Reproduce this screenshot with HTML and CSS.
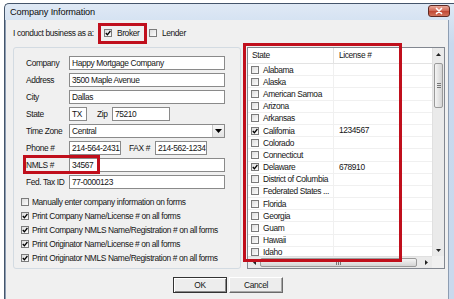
FILE: index.html
```html
<!DOCTYPE html>
<html>
<head>
<meta charset="utf-8">
<link rel="stylesheet" href="styles.css">
</head>
<body>
<div class="window">
  <div class="titlebar">
    <span class="title">Company Information</span>
    <span class="close"><svg viewBox="0 0 22 12" width="22" height="12"><path d="M8 3 L14 9 M14 3 L8 9" stroke="#fff" stroke-width="2" stroke-linecap="round"/></svg></span>
  </div>
  <div class="frame">
    <div class="client">
      <div class="bizrow">
        <span class="biz-lbl">I conduct business as a:</span>
        <span class="chk"><svg viewBox="0 0 6 6"><path d="M0.8 3 L2.4 4.8 L5.4 1"/></svg></span>
        <span class="opt-lbl">Broker</span>
        <span class="chk"></span>
        <span class="opt-lbl">Lender</span>
      </div>
      <div class="main">
        <div class="group">
          <div class="fields">
            <span class="lbl">Company</span><div class="tb">Happy Mortgage Company</div>
            <span class="lbl">Address</span><div class="tb">3500 Maple Avenue</div>
            <span class="lbl">City</span><div class="tb">Dallas</div>
            <span class="lbl">State</span>
            <div class="pair">
              <div class="tb tb-state">TX</div>
              <span class="lbl zip-lbl">Zip</span>
              <div class="tb tb-zip">75210</div>
            </div>
            <span class="lbl">Time Zone</span>
            <div class="tb select">Central<span class="drop"><svg viewBox="0 0 7 4" width="7" height="4"><path d="M0 0 H7 L3.5 4 Z" fill="#000"/></svg></span></div>
            <span class="lbl">Phone #</span>
            <div class="pair">
              <div class="tb tb-phone">214-564-2431</div>
              <span class="lbl fax-lbl">FAX #</span>
              <div class="tb tb-phone">214-562-1234</div>
            </div>
            <span class="lbl">NMLS #</span><div class="tb">34567</div>
            <span class="lbl">Fed. Tax ID</span><div class="tb">77-0000123</div>
          </div>
          <div class="opts">
            <div class="opt"><span class="chk"></span><span>Manually enter company information on forms</span></div>
            <div class="opt"><span class="chk"><svg viewBox="0 0 6 6"><path d="M0.8 3 L2.4 4.8 L5.4 1"/></svg></span><span>Print Company Name/License # on all forms</span></div>
            <div class="opt"><span class="chk"><svg viewBox="0 0 6 6"><path d="M0.8 3 L2.4 4.8 L5.4 1"/></svg></span><span>Print Company NMLS Name/Registration # on all forms</span></div>
            <div class="opt"><span class="chk"><svg viewBox="0 0 6 6"><path d="M0.8 3 L2.4 4.8 L5.4 1"/></svg></span><span>Print Originator Name/License # on all forms</span></div>
            <div class="opt"><span class="chk"><svg viewBox="0 0 6 6"><path d="M0.8 3 L2.4 4.8 L5.4 1"/></svg></span><span>Print Originator NMLS Name/Registration # on all forms</span></div>
          </div>
        </div>
        <div class="list">
          <div class="lv">
            <div class="lv-head"><span class="c1">State</span><span class="c2">License #</span></div>
            <div class="lv-row"><span class="c1"><span class="chk"></span><span class="st">Alabama</span></span><span class="c2"></span></div>
            <div class="lv-row"><span class="c1"><span class="chk"></span><span class="st">Alaska</span></span><span class="c2"></span></div>
            <div class="lv-row"><span class="c1"><span class="chk"></span><span class="st">American Samoa</span></span><span class="c2"></span></div>
            <div class="lv-row"><span class="c1"><span class="chk"></span><span class="st">Arizona</span></span><span class="c2"></span></div>
            <div class="lv-row"><span class="c1"><span class="chk"></span><span class="st">Arkansas</span></span><span class="c2"></span></div>
            <div class="lv-row"><span class="c1"><span class="chk"><svg viewBox="0 0 6 6"><path d="M0.8 3 L2.4 4.8 L5.4 1"/></svg></span><span class="st">California</span></span><span class="c2">1234567</span></div>
            <div class="lv-row"><span class="c1"><span class="chk"></span><span class="st">Colorado</span></span><span class="c2"></span></div>
            <div class="lv-row"><span class="c1"><span class="chk"></span><span class="st">Connecticut</span></span><span class="c2"></span></div>
            <div class="lv-row"><span class="c1"><span class="chk"><svg viewBox="0 0 6 6"><path d="M0.8 3 L2.4 4.8 L5.4 1"/></svg></span><span class="st">Delaware</span></span><span class="c2">678910</span></div>
            <div class="lv-row"><span class="c1"><span class="chk"></span><span class="st">District of Columbia</span></span><span class="c2"></span></div>
            <div class="lv-row"><span class="c1"><span class="chk"></span><span class="st">Federated States ...</span></span><span class="c2"></span></div>
            <div class="lv-row"><span class="c1"><span class="chk"></span><span class="st">Florida</span></span><span class="c2"></span></div>
            <div class="lv-row"><span class="c1"><span class="chk"></span><span class="st">Georgia</span></span><span class="c2"></span></div>
            <div class="lv-row"><span class="c1"><span class="chk"></span><span class="st">Guam</span></span><span class="c2"></span></div>
            <div class="lv-row"><span class="c1"><span class="chk"></span><span class="st">Hawaii</span></span><span class="c2"></span></div>
            <div class="lv-row"><span class="c1"><span class="chk"></span><span class="st">Idaho</span></span><span class="c2"></span></div>
          </div>
          <div class="vs">
            <span class="sbtn"><svg viewBox="0 0 5 3" width="5" height="3"><path d="M0 3 H5 L2.5 0 Z" fill="#222"/></svg></span>
            <span class="vthumb"><span class="grip-h"></span></span>
            <span class="sbtn down"><svg viewBox="0 0 5 3" width="5" height="3"><path d="M0 0 H5 L2.5 3 Z" fill="#222"/></svg></span>
          </div>
          <div class="hs">
            <span class="sbtn"><svg viewBox="0 0 3 5" width="3" height="5"><path d="M3 0 V5 L0 2.5 Z" fill="#222"/></svg></span>
            <span class="hthumb"><span class="grip-v"></span></span>
            <span class="sbtn right"><svg viewBox="0 0 3 5" width="3" height="5"><path d="M0 0 V5 L3 2.5 Z" fill="#222"/></svg></span>
          </div>
          <div class="corner"></div>
        </div>
      </div>
      <div class="buttons">
        <button class="btn default">OK</button>
        <button class="btn">Cancel</button>
      </div>
    </div>
    <div class="rframe"></div>
  </div>
</div>
<div class="hl hl-broker"></div>
<div class="hl hl-nmls"></div>
<div class="hl hl-list"></div>
</body>
</html>
```
FILE: styles.css
```css
* { box-sizing: border-box; }
html, body { margin: 0; padding: 0; }
body {
  width: 454px;
  height: 299px;
  overflow: hidden;
  position: relative;
  background: #fff;
  font-family: "Liberation Sans", Arial, sans-serif;
  font-size: 8.4px;
  letter-spacing: -0.38px;
  color: #151515;
}
.window {
  margin: 3px 0 0 4px;
  width: 452px;
  height: 300px;
  border-left: 1px solid #44556b;
  border-top: 1px solid #44556b;
  border-top-left-radius: 5px;
  background: linear-gradient(#dfe9f5, #c8d9ee 40px, #c9d9ed);
}
.titlebar {
  height: 16px;
  display: flex;
  align-items: center;
  padding: 0 6px 0 5px;
}
.title {
  font-size: 9.2px;
  letter-spacing: -0.15px;
  color: #0c0c0c;
}
.close {
  margin-left: auto;
  align-self: flex-start;
  margin-top: 1px;
  width: 22px;
  height: 12px;
  border: 1px solid #5e2a24;
  border-radius: 3px;
  background: linear-gradient(#e9a99a, #d26e5c 45%, #c24a36 55%, #d2745c);
  display: flex;
}
.close svg { display: block; width: 20px; height: 10px; }
.frame { display: flex; height: 279px; }
.client {
  width: 444px;
  height: 279px;
  background: #f0f0f0;
  border-left: 1px solid #8d9db2;
  border-right: 1px solid #8d9db2;
  padding: 6px 0 0 7px;
}
.rframe { flex: 1; }

.bizrow { display: flex; align-items: center; height: 14px; }
.biz-lbl { width: 91px; white-space: nowrap; }
.opt-lbl { width: 32px; margin-left: 5px; }
.bizrow .opt-lbl:last-child { width: auto; }

.chk {
  width: 8px;
  height: 8px;
  flex: none;
  border: 1px solid #7b7b7b;
  background: linear-gradient(135deg, #dcdcdc, #fdfdfd);
  display: flex;
  align-items: center;
  justify-content: center;
}
.chk svg { width: 6px; height: 6px; display: block; }
.chk path { fill: none; stroke: #000; stroke-width: 1.3; }

.main { display: flex; gap: 6px; margin-top: 7px; }
.group {
  width: 228px;
  height: 222px;
  border: 1px solid #d3dbe2;
  border-radius: 3px;
  padding: 8px 0 0 7px;
}
.fields {
  padding-left: 5px;
  display: grid;
  grid-template-columns: 43px 156px;
  grid-auto-rows: 14px;
  row-gap: 3px;
}
.lbl { line-height: 14px; white-space: nowrap; }
.tb {
  height: 14px;
  border: 1px solid #8a8a8a;
  background: #fff;
  padding-left: 2px;
  line-height: 12px;
  white-space: nowrap;
  overflow: hidden;
}
.pair { display: flex; }
.tb-state { width: 18px; }
.zip-lbl { width: 15px; margin-left: 10px; }
.tb-zip { width: 58px; }
.tb-phone { width: 52px; }
.fax-lbl { width: 26px; margin-left: 8px; }
.select { display: flex; padding-right: 0; }
.drop {
  margin-left: auto;
  width: 12px;
  height: 12px;
  border-left: 1px solid #c8c8c8;
  background: linear-gradient(#f6f6f6, #e2e2e2);
  display: flex;
  align-items: center;
  justify-content: center;
}
.drop svg { display: block; }

.opts { margin-top: 6px; }
.opt { display: flex; align-items: center; height: 14px; gap: 3px; white-space: nowrap; }

.list {
  width: 198px;
  height: 222px;
  border: 1px solid #828790;
  background: #fff;
  display: grid;
  grid-template-columns: 184px 12px;
  grid-template-rows: 208px 12px;
}
.lv { overflow: hidden; }
.lv-head {
  display: flex;
  height: 16px;
  line-height: 15px;
  border-bottom: 1px solid #e3e3e3;
}
.lv-head .c1 { width: 86px; border-right: 1px solid #e3e3e3; padding-left: 4px; }
.lv-head .c2 { padding-left: 5px; }
.lv-row {
  display: flex;
  height: 12.2px;
  border-bottom: 1px solid #f0f0f0;
}
.lv-row .c1 {
  width: 86px;
  border-right: 1px solid #f0f0f0;
  padding-left: 3px;
  display: flex;
  align-items: center;
  white-space: nowrap;
}
.lv-row .c2 { padding-left: 5px; line-height: 11px; }
.st { margin-left: 4px; }

.vs {
  background: #eaeaea;
  border-left: 1px solid #e0e0e0;
  display: flex;
  flex-direction: column;
  align-items: center;
}
.sbtn {
  width: 12px;
  height: 12px;
  flex: none;
  display: flex;
  align-items: center;
  justify-content: center;
}
.sbtn svg { display: block; }
.sbtn.down { margin-top: auto; }
.vthumb {
  margin-top: 3px;
  width: 9px;
  height: 45px;
  border: 1px solid #9a9a9a;
  border-radius: 2px;
  background: linear-gradient(to right, #f4f4f4, #e4e4e4 50%, #d4d4d4);
  display: flex;
  align-items: center;
  justify-content: center;
}
.grip-h {
  width: 4px;
  height: 5px;
  border-top: 1px solid #777;
  border-bottom: 1px solid #777;
  background: linear-gradient(transparent 1px, #777 1px, #777 2px, transparent 2px);
}
.hs {
  background: #eaeaea;
  border-top: 1px solid #e0e0e0;
  display: flex;
  align-items: center;
}
.sbtn.right { margin-left: auto; }
.hthumb {
  width: 157px;
  height: 9px;
  border: 1px solid #9a9a9a;
  border-radius: 2px;
  background: linear-gradient(#f4f4f4, #e4e4e4 50%, #d4d4d4);
  display: flex;
  align-items: center;
  justify-content: center;
}
.grip-v {
  width: 5px;
  height: 4px;
  border-left: 1px solid #777;
  border-right: 1px solid #777;
  background: linear-gradient(to right, transparent 1px, #777 1px, #777 2px, transparent 2px);
}
.corner { background: #f0f0f0; }

.buttons { display: flex; gap: 2px; margin-top: 8px; padding-left: 160px; }
.btn {
  width: 54px;
  height: 16px;
  padding: 0;
  font-family: inherit;
  font-size: 8.4px;
  letter-spacing: -0.38px;
  color: #151515;
  background: #ededed;
  border: 1px solid;
  border-color: #fff #6a6a6a #6a6a6a #fff;
  box-shadow: inset -1px -1px #a8a8a8;
}
.btn.default {
  border-color: #333;
  box-shadow: inset 1px 1px #fff, inset -1px -1px #8a8a8a;
}

.hl {
  position: absolute;
  border: 3px solid #c00f1c;
}
.hl-broker { left: 98px; top: 23px; width: 49px; height: 21px; }
.hl-nmls { left: 23px; top: 155px; width: 77px; height: 19px; }
.hl-list { left: 243px; top: 43px; width: 159px; height: 219px; }
```
